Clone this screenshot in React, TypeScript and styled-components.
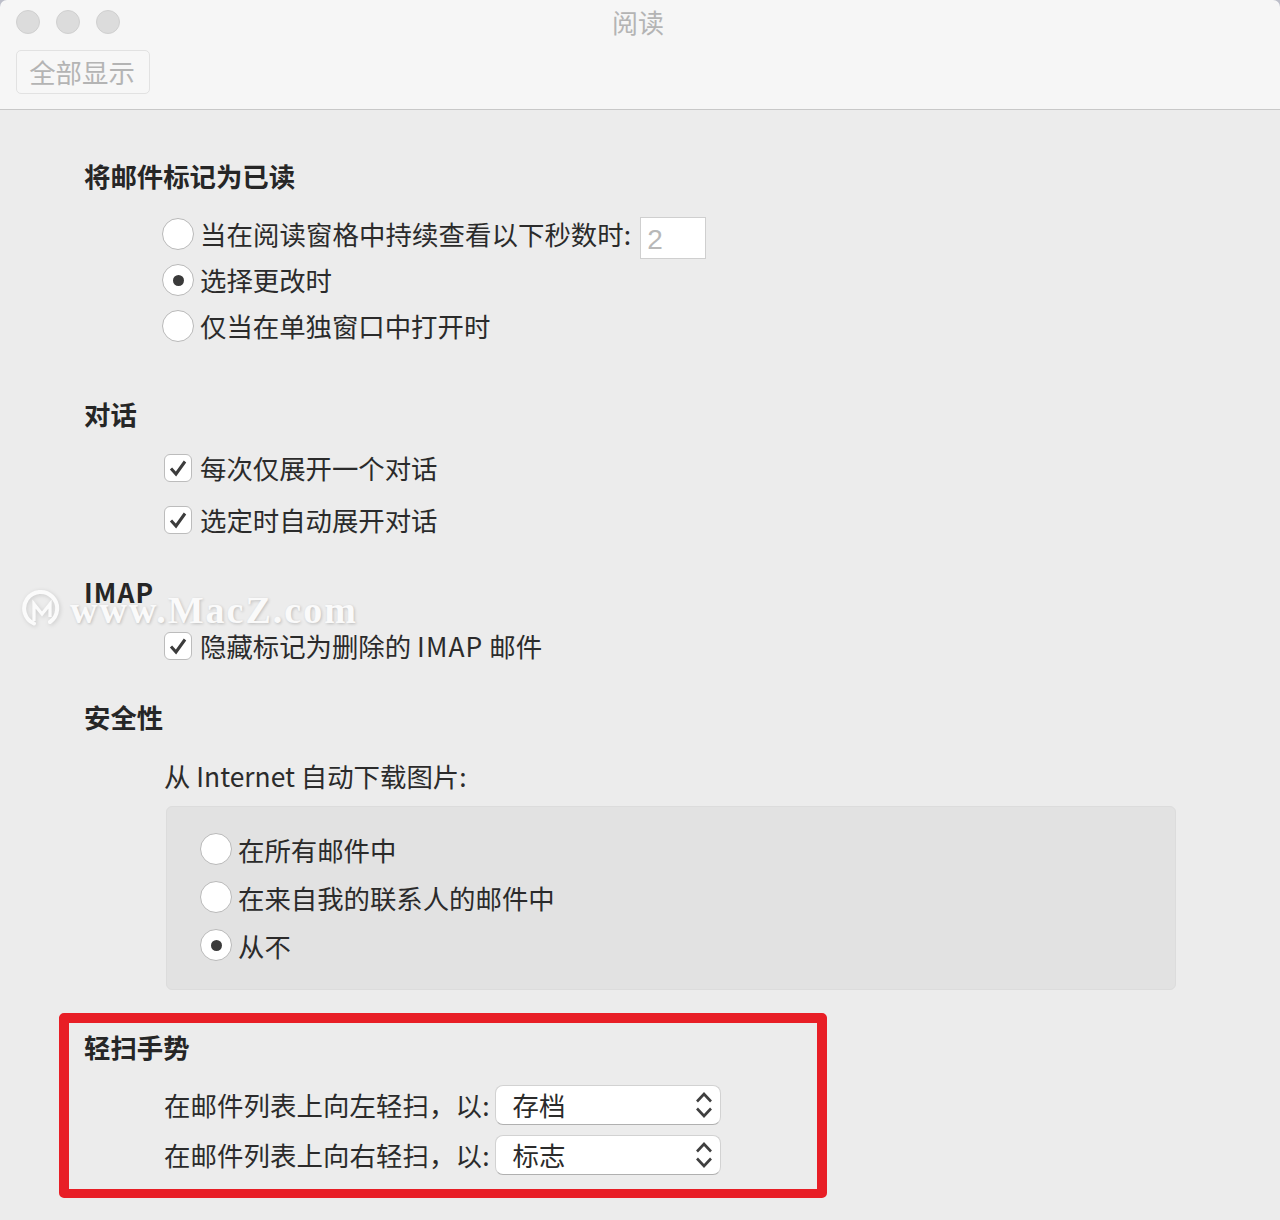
import styled, { createGlobalStyle } from "styled-components";

const GlobalStyle = createGlobalStyle`
    html, body {
        margin: 0;
        padding: 0;
        background: #ececec;
    }
    body {
        font-family: "Noto Sans CJK SC", "Noto Sans", sans-serif;
        color: #2b2b2b;
    }
`;

const Radio = ({ checked }: { checked?: boolean }) => (
    <RadioCircle>{checked && <RadioDot />}</RadioCircle>
);

const Check = () => (
    <CheckBox>
        <svg width="20" height="20" viewBox="0 0 20 20" fill="none">
            <path d="M3 10.5 L8 16 L17 3.5" stroke="#3c3c3c" strokeWidth="3" />
        </svg>
    </CheckBox>
);

const Chevrons = () => (
    <svg width="18" height="30" viewBox="0 0 18 30" fill="none">
        <path d="M2 11.5 L9 4 L16 11.5" stroke="#3f3f3f" strokeWidth="2.6" />
        <path d="M2 18.5 L9 26 L16 18.5" stroke="#3f3f3f" strokeWidth="2.6" />
    </svg>
);

const Logo = () => (
    <LogoMark width="40" height="42" viewBox="0 0 40 42" fill="none">
        <path
            d="M13 34.5 A16.5 16.5 0 1 1 29 33"
            stroke="#fbfbfb"
            strokeWidth="4"
            strokeLinecap="round"
        />
        <path d="M13 32 V15 L21 25 L29 15 V28" stroke="#fbfbfb" strokeWidth="3.2" />
    </LogoMark>
);

export default function App() {
    return (
        <Page>
            <GlobalStyle />
            <TitleBar>
                <TitleRow>
                    <Lights>
                        <Light />
                        <Light />
                        <Light />
                    </Lights>
                    <WindowTitle>阅读</WindowTitle>
                </TitleRow>
                <ToolButton>全部显示</ToolButton>
            </TitleBar>

            <Content>
                <Heading $top={49}>将邮件标记为已读</Heading>
                <Group $top={17}>
                    <Row>
                        <Radio />
                        <DelayLabel>当在阅读窗格中持续查看以下秒数时:</DelayLabel>
                        <NumberField>2</NumberField>
                    </Row>
                    <Row>
                        <Radio checked />
                        <RadioLabel>选择更改时</RadioLabel>
                    </Row>
                    <Row>
                        <Radio />
                        <RadioLabel>仅当在单独窗口中打开时</RadioLabel>
                    </Row>
                </Group>

                <Heading $top={47}>对话</Heading>
                <CheckGroup $top={13}>
                    <CheckRow>
                        <Check />
                        <Label>每次仅展开一个对话</Label>
                    </CheckRow>
                    <CheckRow>
                        <Check />
                        <Label>选定时自动展开对话</Label>
                    </CheckRow>
                </CheckGroup>

                <Heading $top={31}>
                    <Latin>IMAP</Latin>
                </Heading>
                <CheckGroup $top={13}>
                    <CheckRow>
                        <Check />
                        <Label>
                            隐藏标记为删除的 <Latin>IMAP</Latin> 邮件
                        </Label>
                    </CheckRow>
                </CheckGroup>

                <Heading $top={30}>安全性</Heading>
                <PlainLine>从 Internet 自动下载图片:</PlainLine>
                <Panel>
                    <PanelRow>
                        <Radio />
                        <span>在所有邮件中</span>
                    </PanelRow>
                    <PanelRow>
                        <Radio />
                        <span>在来自我的联系人的邮件中</span>
                    </PanelRow>
                    <PanelRow>
                        <Radio checked />
                        <span>从不</span>
                    </PanelRow>
                </Panel>

                <Highlight>
                    <Heading $top={7}>轻扫手势</Heading>
                    <SelectRows>
                        <SelectRow>
                            <SelectLabel>在邮件列表上向左轻扫，以:</SelectLabel>
                            <Select>
                                <span>存档</span>
                                <Chevrons />
                            </Select>
                        </SelectRow>
                        <SelectRow>
                            <SelectLabel>在邮件列表上向右轻扫，以:</SelectLabel>
                            <Select>
                                <span>标志</span>
                                <Chevrons />
                            </Select>
                        </SelectRow>
                    </SelectRows>
                </Highlight>
            </Content>

            <Watermark>
                <Logo />
                <WatermarkText>www.MacZ.com</WatermarkText>
            </Watermark>
        </Page>
    );
}

const Page = styled.div`
    position: relative;
    display: flex;
    flex-direction: column;
    width: 1280px;
    height: 1220px;
    overflow: hidden;
    background: #bcbec9;
    font-size: 26.4px;
    line-height: 36px;
`;

const TitleBar = styled.header`
    box-sizing: border-box;
    flex: none;
    height: 110px;
    padding: 9px 16px 0;
    background: #f6f6f6;
    border-bottom: 1px solid #c8c8c8;
    border-radius: 7px 7px 0 0;
`;

const TitleRow = styled.div`
    position: relative;
    display: flex;
    align-items: center;
    justify-content: center;
    height: 26px;
    margin-bottom: 15px;
`;

const Lights = styled.div`
    position: absolute;
    left: 0;
    top: 1px;
    display: flex;
    gap: 16px;
`;

const Light = styled.span`
    box-sizing: border-box;
    width: 24px;
    height: 24px;
    border-radius: 50%;
    background: #dcdcdc;
    border: 1px solid #d0d0d0;
`;

const WindowTitle = styled.h1`
    margin: 0 0 0 -4px;
    font-size: 26px;
    line-height: 26px;
    font-weight: 400;
    color: #b4b4b4;
`;

const ToolButton = styled.button`
    display: block;
    box-sizing: border-box;
    width: 134px;
    height: 44px;
    padding: 0 2px 0 0;
    background: #f7f7f7;
    border: 1px solid #e2e2e2;
    border-radius: 5px;
    font: inherit;
    font-size: 26.4px;
    line-height: 42px;
    color: #b4b4b4;
`;

const Content = styled.main`
    display: flex;
    flex: 1;
    flex-direction: column;
    padding-left: 84px;
    background: #ececec;
`;

const Heading = styled.h2<{ $top: number }>`
    margin: ${(p) => p.$top}px 0 0;
    padding-bottom: 2px;
    font-size: 26.4px;
    line-height: 34px;
    font-weight: 700;
    color: #262626;
`;

const Latin = styled.span`
    letter-spacing: 1.1px;
`;

const Label = styled.span`
    padding-bottom: 2px;
    line-height: 34px;
`;

const RadioLabel = styled(Label)`
    margin-left: 6px;
`;

const DelayLabel = styled(RadioLabel)`
    letter-spacing: 0.1px;
`;

const SelectLabel = styled.span`
    letter-spacing: 0.12px;
`;

const Group = styled.div<{ $top: number }>`
    display: flex;
    flex-direction: column;
    margin: ${(p) => p.$top}px 0 0 78px;
`;

const Row = styled.div`
    display: flex;
    align-items: center;
    height: 46px;
`;

const RadioCircle = styled.span`
    display: flex;
    align-items: center;
    justify-content: center;
    box-sizing: border-box;
    flex: none;
    width: 32px;
    height: 32px;
    margin-top: -2px;
    border-radius: 50%;
    background: #fff;
    border: 1px solid #b9b9b9;
`;

const RadioDot = styled.span`
    width: 11px;
    height: 11px;
    border-radius: 50%;
    background: #3a3a3a;
`;

const NumberField = styled.span`
    box-sizing: border-box;
    width: 66px;
    height: 42px;
    margin: 6px 0 0 9px;
    padding-left: 6px;
    background: #fff;
    border: 1px solid #cfcfcf;
    font-family: "Liberation Sans", sans-serif;
    font-size: 28px;
    line-height: 44px;
    color: #b8b8b8;
`;

const CheckGroup = styled.div<{ $top: number }>`
    display: flex;
    flex-direction: column;
    gap: 6px;
    margin: ${(p) => p.$top}px 0 0 80px;
`;

const CheckRow = styled.div`
    display: flex;
    align-items: center;
    gap: 8px;
    height: 46px;
`;

const CheckBox = styled.span`
    display: flex;
    align-items: center;
    justify-content: center;
    box-sizing: border-box;
    flex: none;
    width: 28px;
    height: 28px;
    margin-top: -2px;
    border-radius: 6px;
    background: #fff;
    border: 1px solid #bcbcbc;
`;

const PlainLine = styled.div`
    height: 46px;
    margin: 18px 0 0 80px;
    line-height: 44px;
`;

const Panel = styled.section`
    box-sizing: border-box;
    width: 1010px;
    height: 184px;
    margin: 6px 0 0 82px;
    padding: 19px 0 0 33px;
    background: #e2e2e2;
    border: 1px solid #dcdcdc;
    border-radius: 6px;
`;

const PanelRow = styled.div`
    display: flex;
    align-items: center;
    gap: 6px;
    height: 48px;
`;

const Highlight = styled.section`
    box-sizing: border-box;
    width: 768px;
    height: 185px;
    margin: 23px 0 0 -25px;
    padding: 0 15px;
    border: solid #e81e26;
    border-width: 10px 10px 9px;
    border-radius: 5px;
`;

const SelectRows = styled.div`
    display: flex;
    flex-direction: column;
    gap: 10px;
    margin: 19px 0 0 80px;
`;

const SelectRow = styled.div`
    display: flex;
    align-items: center;
    gap: 5px;
    height: 40px;
`;

const Select = styled.div`
    display: flex;
    align-items: center;
    justify-content: space-between;
    box-sizing: border-box;
    width: 226px;
    height: 40px;
    padding: 0 7px 0 17px;
    background: #fff;
    border: 1px solid #d2d2d2;
    border-bottom-color: #b0b0b0;
    border-radius: 8px;
`;

const Watermark = styled.div`
    position: absolute;
    left: 21px;
    top: 589px;
    display: flex;
    align-items: center;
    gap: 9px;
`;

const LogoMark = styled.svg`
    filter: drop-shadow(1px 1px 2px rgba(0, 0, 0, 0.14));
`;

const WatermarkText = styled.span`
    font-family: "Liberation Serif", serif;
    font-size: 38px;
    line-height: 42px;
    font-weight: 700;
    letter-spacing: 2px;
    color: #fafafa;
    text-shadow: 1px 1px 3px rgba(0, 0, 0, 0.2);
`;
